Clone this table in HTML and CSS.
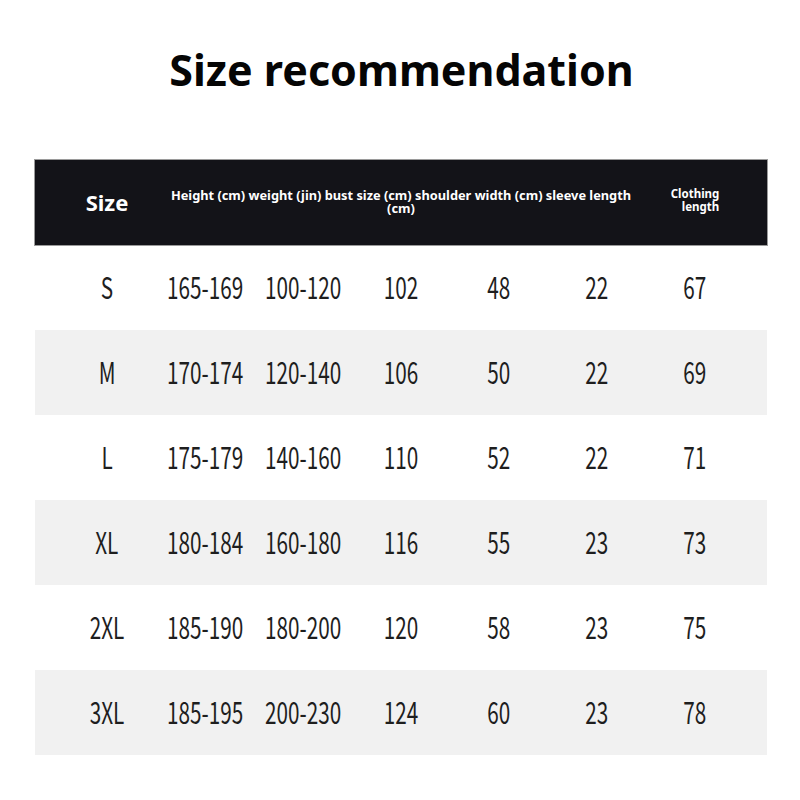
FILE: index.html
```html
<!DOCTYPE html>
<html>
<head>
<meta charset="utf-8">
<link rel="stylesheet" href="styles.css">
</head>
<body>
<div class="page">
  <h1 class="title">Size recommendation</h1>
  <div class="table">
    <div class="row head">
      <div class="cell hsize">Size</div>
      <div class="cell hmulti">Height (cm) weight (jin) bust size (cm) shoulder width (cm) sleeve length (cm)</div>
      <div class="cell hcloth"><span class="hcloth-text">Clothing<br>length</span></div>
    </div>
    <div class="row"><div class="cell"><span class="n">S</span></div><div class="cell"><span class="n">165-169</span></div><div class="cell"><span class="n">100-120</span></div><div class="cell"><span class="n">102</span></div><div class="cell"><span class="n">48</span></div><div class="cell"><span class="n">22</span></div><div class="cell"><span class="n">67</span></div></div>
    <div class="row alt"><div class="cell"><span class="n">M</span></div><div class="cell"><span class="n">170-174</span></div><div class="cell"><span class="n">120-140</span></div><div class="cell"><span class="n">106</span></div><div class="cell"><span class="n">50</span></div><div class="cell"><span class="n">22</span></div><div class="cell"><span class="n">69</span></div></div>
    <div class="row"><div class="cell"><span class="n">L</span></div><div class="cell"><span class="n">175-179</span></div><div class="cell"><span class="n">140-160</span></div><div class="cell"><span class="n">110</span></div><div class="cell"><span class="n">52</span></div><div class="cell"><span class="n">22</span></div><div class="cell"><span class="n">71</span></div></div>
    <div class="row alt"><div class="cell"><span class="n">XL</span></div><div class="cell"><span class="n">180-184</span></div><div class="cell"><span class="n">160-180</span></div><div class="cell"><span class="n">116</span></div><div class="cell"><span class="n">55</span></div><div class="cell"><span class="n">23</span></div><div class="cell"><span class="n">73</span></div></div>
    <div class="row"><div class="cell"><span class="n">2XL</span></div><div class="cell"><span class="n">185-190</span></div><div class="cell"><span class="n">180-200</span></div><div class="cell"><span class="n">120</span></div><div class="cell"><span class="n">58</span></div><div class="cell"><span class="n">23</span></div><div class="cell"><span class="n">75</span></div></div>
    <div class="row alt"><div class="cell"><span class="n">3XL</span></div><div class="cell"><span class="n">185-195</span></div><div class="cell"><span class="n">200-230</span></div><div class="cell"><span class="n">124</span></div><div class="cell"><span class="n">60</span></div><div class="cell"><span class="n">23</span></div><div class="cell"><span class="n">78</span></div></div>
  </div>
</div>
</body>
</html>
```
FILE: styles.css
```css
html, body {
  margin: 0;
  padding: 0;
  background: #ffffff;
}
.page {
  width: 800px;
  height: 800px;
  padding-top: 42px;
  box-sizing: border-box;
  font-family: "Noto Sans", sans-serif;
}
.title {
  margin: 0;
  padding-left: 3px;
  text-align: center;
  font-size: 43px;
  font-weight: 700;
  line-height: 56px;
  color: #050505;
}
.table {
  margin: 62px 33px 0 35px;
}
.row {
  display: grid;
  grid-template-columns: repeat(7, 98px);
  padding: 0 23px;
  height: 85px;
  align-items: center;
}
.row.alt {
  background: #f1f1f1;
}
.row.head {
  background: #131318;
  color: #ffffff;
  box-shadow: 0 0 0 1px #9a9a9a;
}
.cell {
  display: flex;
  justify-content: center;
  text-align: center;
  white-space: nowrap;
}
.n {
  display: inline-block;
  margin-top: -4px;
  font-family: "Noto Sans CJK SC", "Noto Sans", sans-serif;
  font-size: 30px;
  line-height: 30px;
  color: #1e1e1e;
  transform: scaleX(0.69);
}
.hsize {
  font-size: 22px;
  font-weight: 700;
  position: relative;
  top: -1px;
}
.hmulti {
  display: block;
  grid-column: 2 / 7;
  white-space: normal;
  font-size: 12.8px;
  font-weight: 700;
  line-height: 13px;
  padding: 0 10px;
  position: relative;
  top: -1px;
}
.hcloth {
  font-size: 11.5px;
  font-weight: 700;
  line-height: 12.5px;
  position: relative;
  top: -2px;
}
.hcloth-text {
  display: inline-block;
  text-align: right;
}
```
